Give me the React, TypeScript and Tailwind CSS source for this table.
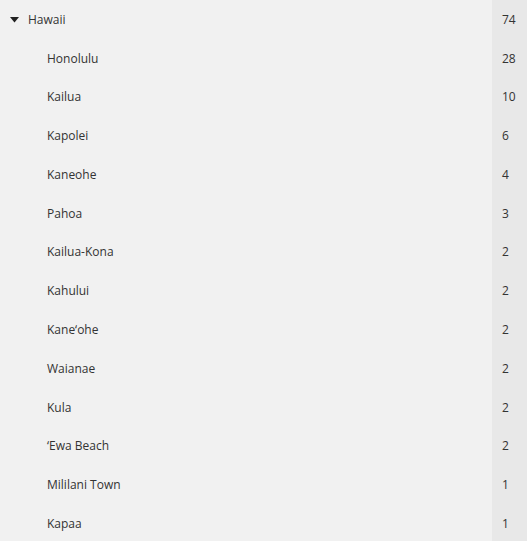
const cities: Array<[string, number]> = [
  ["Honolulu", 28],
  ["Kailua", 10],
  ["Kapolei", 6],
  ["Kaneohe", 4],
  ["Pahoa", 3],
  ["Kailua-Kona", 2],
  ["Kahului", 2],
  ["Kane‘ohe", 2],
  ["Waianae", 2],
  ["Kula", 2],
  ["‘Ewa Beach", 2],
  ["Mililani Town", 1],
  ["Kapaa", 1],
];

const Row = ({ label, count, top }: { label: string; count: number; top?: boolean }) => (
  <div className="flex h-[38.77px] items-center">
    <div className={`flex flex-1 items-center pt-[1px] ${top ? "pl-[10px]" : "pl-[47px]"}`}>
      {top && (
        <svg width="9" height="6" viewBox="0 0 9 6" className="mr-[9px]">
          <path d="M0 0h9L4.5 5.5z" fill="#222" />
        </svg>
      )}
      <span>{label}</span>
    </div>
    <div className="flex h-full w-[35px] items-center bg-[#e8e8e8] pl-[10px] pt-[1px]">{count}</div>
  </div>
);

export default function App() {
  return (
    <div
      className="h-[541px] w-[527px] overflow-hidden bg-[#f1f1f1] text-[12px] text-[#333]"
      style={{ fontFamily: "'Open Sans', 'Liberation Sans', sans-serif" }}
    >
      <Row label="Hawaii" count={74} top />
      {cities.map(([name, n]) => (
        <Row key={name} label={name} count={n} />
      ))}
    </div>
  );
}
